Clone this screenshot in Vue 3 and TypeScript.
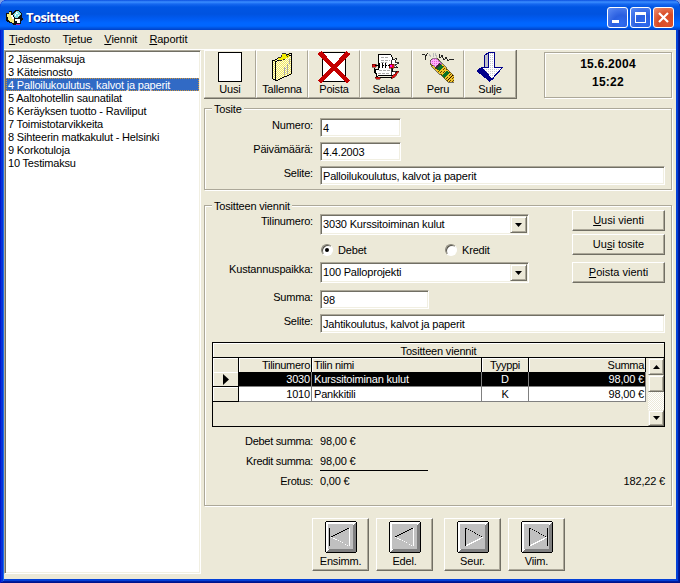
<script setup lang="ts">
import { ref } from 'vue'

interface MenuItem { before: string; key: string; after: string }
interface Entry { account: string; name: string; type: string; sum: string }

const menu: MenuItem[] = [
  { before: '', key: 'T', after: 'iedosto' },
  { before: 'T', key: 'i', after: 'etue' },
  { before: '', key: 'V', after: 'iennit' },
  { before: '', key: 'R', after: 'aportit' },
]

const vouchers: string[] = [
  '2 Jäsenmaksuja',
  '3 Käteisnosto',
  '4 Palloilukoulutus, kalvot ja paperit',
  '5 Aaltohotellin saunatilat',
  '6 Keräyksen tuotto - Raviliput',
  '7 Toimistotarvikkeita',
  '8 Sihteerin matkakulut - Helsinki',
  '9 Korkotuloja',
  '10 Testimaksu',
]
const selectedVoucher = ref(2)

const tools: string[] = ['Uusi', 'Tallenna', 'Poista', 'Selaa', 'Peru', 'Sulje']

const entries: Entry[] = [
  { account: '3030', name: 'Kurssitoiminan kulut', type: 'D', sum: '98,00 €' },
  { account: '1010', name: 'Pankkitili', type: 'K', sum: '98,00 €' },
]
const currentEntry = ref(0)
const side = ref<'debet' | 'kredit'>('debet')

const nav: string[] = ['Ensimm.', 'Edel.', 'Seur.', 'Viim.']
</script>

<template>
  <div class="desktop">
    <div class="window">
      <header class="titlebar">
        <svg class="app-icon" width="17" height="16" viewBox="0 0 17 16" shape-rendering="crispEdges">
          <path d="M0 3h3v-2h3v2l3-3h4l3 4v3l1 2-2 2v3h-3v1h-4l-3-2-4-1-2-4z" fill="#111" />
          <path d="M1 4h2v-2h2v3l3 5v3l-4-1-2-3z" fill="#f4ec7c" />
          <path d="M7 4l3-3h3l2 3-3 4H9z" fill="#7fe0e8" />
          <path d="M10 2h1v1h1v1h-2v2h-1V4h1zM12 5h1v1h-1z" fill="#fff" />
          <path d="M9 9h5v4h-3v-2H9z" fill="#fff" />
          <path d="M5 5h2v2h1v2H6V7H5z" fill="#fff" />
          <path d="M10 14h4v1h-4z" fill="#c020b0" />
        </svg>
        <span class="title">Tositteet</span>
        <span class="win-btn"><svg width="19" height="19"><path d="M4 12h7v3H4z" fill="#fff" /></svg></span>
        <span class="win-btn"><svg width="19" height="19"><path d="M4 4h11v11H4zM5 7v7h9V7z" fill="#fff" fill-rule="evenodd" /></svg></span>
        <span class="win-btn close"><svg width="19" height="19"><path d="M5 5l9 9M14 5l-9 9" stroke="#fff" stroke-width="2.2" /></svg></span>
      </header>

      <nav class="menu">
        <span v-for="m in menu" :key="m.after">{{ m.before }}<u>{{ m.key }}</u>{{ m.after }}</span>
      </nav>

      <div class="client">
        <ul class="list">
          <li
            v-for="(v, i) in vouchers"
            :key="v"
            :class="{ selected: i === selectedVoucher }"
            @click="selectedVoucher = i"
          >{{ v }}</li>
        </ul>

        <main class="main">
          <div class="top">
            <div class="toolbar">
              <button v-for="(t, i) in tools" :key="t" class="tool">
                <svg width="32" height="32" viewBox="0 0 32 32" shape-rendering="crispEdges">
                  <template v-if="i === 0">
                    <rect x="4.500" y="1.500" width="23" height="29" fill="#fff" stroke="#000" />
                  </template>
                  <template v-else-if="i === 1">
                    <defs>
                      <pattern id="yellow" width="2" height="2" patternUnits="userSpaceOnUse">
                        <rect width="2" height="2" fill="#fffce0" />
                        <path d="M0 0h1v1H0zM1 1h1v1H1z" fill="#f0e860" />
                      </pattern>
                    </defs>
                    <path d="M6.500 9.500L24.500 1.500V22.500L9.500 29.500L6.500 27.500Z" fill="url(#yellow)" />
                    <path d="M6 9h1v19H6zM9 11h1v19H9zM25 2h1v21h-1zM7 28h2v1H7zM7 9h2v1H7zM9 8h2v1H9zM11 7h2v1h-2zM21 3h2v1h-2zM23 2h2v1h-2zM9 10h2v1H9zM11 9h2v1h-2zM21 5h2v1h-2zM23 4h2v1h-2zM10 29h2v1h-2zM12 28h2v1h-2zM14 27h2v1h-2zM16 26h2v1h-2zM18 25h3v1h-3zM21 24h2v1h-2zM23 23h2v1h-2z" fill="#000" />
                    <path d="M12 8V6h3V4l2-2h3v2h3v2l-4 2-5 2z" fill="#f4ee00" />
                    <path d="M12 6h3v1h-3zM15 4h1v2h-1zM16 2h4v1h-4zM20 3h1v2h-1zM21 5h1v1h-1zM13 9h3v1h-3zM17 8h2v1h-2z" fill="#333" />
                    <path d="M18 16h1v8h-1zM21 13h1v10h-1zM23 8h1v5h-1zM19 17h1v1h-1z" fill="#aaa" />
                  </template>
                  <template v-else-if="i === 2">
                    <rect x="4.500" y="1.500" width="23" height="29" fill="#fff" stroke="#000" />
                    <path d="M1.500 1.500L30.500 31M30.500 1.500L1.500 31" stroke="#c40000" stroke-width="4.400" />
                  </template>
                  <template v-else-if="i === 3">
                    <path d="M8.500 3.500H20.500L22.500 6.500V24.500H9.500L6.500 25.500L5.500 18.500H8.500Z" fill="#fff" stroke="#000" />
                    <path d="M11 6.500h8M11 9.500h9M11 11.500h6M9 19.500h11M8 22.500h11" stroke="#aaa" stroke-dasharray="3 1" />
                    <path d="M22 9l5-2-2 4 4 1-4 2 3 3-5-1-1 5 5-1-3 4h-3z" fill="#fff" stroke="#000" stroke-width=".8" />
                    <path d="M2 13h4v3H2zM19 13h5v4h-5zM5 26h5v2H6zM21 26l7-6h1l-4 6-4 2z" fill="#e01010" stroke="#400" stroke-width=".5" />
                    <path d="M5 14.500H20M9.500 12v5M12.500 12v5M15.500 12v5" stroke="#000" />
                    <path d="M10 14.500h2M14 14.500h1M17 14.500h1" stroke="#fff" />
                    <path d="M20 14h2v2h-2z" fill="#f0f" />
                    <path d="M4.500 17v4l2 2M10 26.500h12" fill="none" stroke="#000" />
                  </template>
                  <template v-else-if="i === 4">
                    <defs>
                      <pattern id="pencil" width="3" height="3" patternUnits="userSpaceOnUse">
                        <rect width="3" height="3" fill="#f0c428" />
                        <path d="M0 0h1v1H0zM1 2h1v1H1z" fill="#604000" />
                      </pattern>
                      <pattern id="rubber" width="2" height="2" patternUnits="userSpaceOnUse">
                        <rect width="2" height="2" fill="#ffb4fa" />
                        <path d="M0 0h1v1H0z" fill="#e858dc" />
                      </pattern>
                    </defs>
                    <path d="M0 3.500h3v5M3 6l3-4M17 3l1 4 2-3 2 5 2-3 2 4 2-2h4" fill="none" stroke="#111" stroke-width=".9" />
                    <path d="M7 3l2 3M11 2l1 4M13 2l2 5" fill="none" stroke="#bbb" />
                    <path d="M9 9l3-2h3l3 3L32 25v6h-6L11 17l-3-4z" fill="url(#pencil)" stroke="#222" stroke-width=".6" />
                    <path d="M9 9l2-2h3l6 6-5 5-7-6z" fill="url(#rubber)" stroke="#333" stroke-width=".5" />
                    <path d="M17 12l2 1-4 5-2-1z" fill="#333" />
                    <path d="M19 13l2 3-4 4-2-2z" fill="#087028" />
                    <path d="M25 19l2 3-5 5-2-3z" fill="#087028" />
                    <path d="M26 29l5-5" stroke="#200" />
                  </template>
                  <template v-else>
                    <defs>
                      <pattern id="dots" width="2" height="2" patternUnits="userSpaceOnUse">
                        <rect width="2" height="2" fill="#fff" />
                        <path d="M0 0h1v1H0z" fill="#c8c8d0" />
                      </pattern>
                    </defs>
                    <path d="M10.500 4.500L14.500 1.500V17L10.500 17Z" fill="#c0c0c8" stroke="#00008a" />
                    <path d="M3 20L8 16L20 27L15.500 30Z" fill="#00008a" stroke="#00008a" />
                    <path d="M14.500 1.500H20.500V16.500H28.500L18 28L7.500 16.500H14.500Z" fill="url(#dots)" stroke="#00008a" />
                  </template>
                </svg>
                <span>{{ t }}</span>
              </button>
            </div>
            <div class="clock"><span>15.6.2004</span><span>15:22</span></div>
          </div>

          <section class="group voucher">
            <h2>Tosite</h2>
            <div class="row"><label>Numero:</label><div class="field small">4</div></div>
            <div class="row"><label>Päivämäärä:</label><div class="field small">4.4.2003</div></div>
            <div class="row"><label>Selite:</label><div class="field wide">Palloilukoulutus, kalvot ja paperit</div></div>
          </section>

          <section class="group lines">
            <h2>Tositteen viennit</h2>
            <div class="split">
              <div class="form">
                <div class="row combo-row">
                  <label>Tilinumero:</label>
                  <div class="field combo">3030 Kurssitoiminan kulut
                    <span class="arrow"><svg width="7" height="4"><path d="M0 0h7L3.500 4z" /></svg></span>
                  </div>
                </div>
                <div class="radios">
                  <span class="option" @click="side = 'debet'"><i :class="['radio', { on: side === 'debet' }]"></i>Debet</span>
                  <span class="option" @click="side = 'kredit'"><i :class="['radio', { on: side === 'kredit' }]"></i>Kredit</span>
                </div>
                <div class="row combo-row second">
                  <label>Kustannuspaikka:</label>
                  <div class="field combo">100 Palloprojekti
                    <span class="arrow"><svg width="7" height="4"><path d="M0 0h7L3.500 4z" /></svg></span>
                  </div>
                </div>
                <div class="row"><label>Summa:</label><div class="field amount">98</div></div>
              </div>
              <div class="actions">
                <button class="btn"><span><u>U</u>usi vienti</span></button>
                <button class="btn"><span>Uu<u>s</u>i tosite</span></button>
                <button class="btn last"><span><u>P</u>oista vienti</span></button>
              </div>
            </div>
            <div class="row"><label>Selite:</label><div class="field wide">Jahtikoulutus, kalvot ja paperit</div></div>

            <div class="grid">
              <div class="caption">Tositteen viennit</div>
              <div class="grid-body">
                <div class="cells">
                  <div class="line head">
                    <span></span><span class="num">Tilinumero</span><span>Tilin nimi</span><span class="mid">Tyyppi</span><span class="num">Summa</span>
                  </div>
                  <div v-for="(e, i) in entries" :key="e.account" :class="['line', { current: i === currentEntry }]">
                    <span class="marker"><svg v-if="i === currentEntry" width="6" height="11"><path d="M0 0L6 5.500L0 11z" /></svg></span>
                    <span class="num">{{ e.account }}</span><span>{{ e.name }}</span><span class="mid">{{ e.type }}</span><span class="num">{{ e.sum }}</span>
                  </div>
                </div>
                <div class="scroll">
                  <span class="sb"><svg width="7" height="4"><path d="M0 4h7L3.500 0z" /></svg></span>
                  <span class="sb thumb"></span>
                  <span class="sb down"><svg width="7" height="4"><path d="M0 0h7L3.500 4z" /></svg></span>
                </div>
              </div>
            </div>

            <div class="sums">
              <div class="sum"><label>Debet summa:</label><span>98,00 €</span></div>
              <div class="sum"><label>Kredit summa:</label><span class="ruled">98,00 €</span></div>
              <div class="sum"><label>Erotus:</label><span>0,00 €</span><span class="total">182,22 €</span></div>
            </div>
          </section>

          <div class="nav">
            <button v-for="(n, i) in nav" :key="n" :class="['nav-btn', { apart: i === 2 }]">
              <svg width="32" height="32" viewBox="0 0 32 32" shape-rendering="crispEdges">
                <path d="M1 0h30v1h1v30h-1v1H1v-1H0V1h1z" fill="#000" />
                <path d="M1 1h30v30H1z" fill="#808080" />
                <path d="M1 1h30l-3 3v24H4l-3 3z" fill="#fff" />
                <path d="M3 3h25v25H3z" fill="#c0c0c0" />
                <g fill="none">
                  <template v-if="i < 2">
                    <path d="M24.500 7v18" stroke="#fff" />
                    <path d="M6 16L24 25" stroke="#fff" stroke-dasharray="1.500 1" />
                    <path d="M6 16L24 7" stroke="#000" stroke-width="1.200" />
                    <path v-if="i === 0" d="M4.500 7v18" stroke="#000" />
                  </template>
                  <template v-else>
                    <path d="M8.500 25L26 16" stroke="#fff" stroke-width="1.300" />
                    <path d="M8.500 7L26 16" stroke="#000" stroke-dasharray="1.500 1" />
                    <path d="M8.500 7v18" stroke="#000" />
                    <path v-if="i === 3" d="M26.500 7v18" stroke="#000" />
                  </template>
                </g>
              </svg>
              <span>{{ n }}</span>
            </button>
          </div>
        </main>
      </div>
    </div>
  </div>
</template>

<style>
body { margin: 0; background: #6f94dc; }
</style>

<style scoped>
* { box-sizing: border-box; }
.desktop { width: 680px; height: 583px; background: #7d9fe6; overflow: hidden; }
.window {
  width: 680px; height: 583px; border-radius: 7px 7px 0 0; overflow: hidden;
  display: flex; flex-direction: column;
  background: #0831d9; padding: 0 4px 4px;
  box-shadow: inset 1px 0 #0019cf, inset -1px -1px #00138c, inset 3px 0 #0831d9, inset -2px -2px #001ea0, inset 4px 0 #166aee, inset -4px -4px #0441d8;
  font: 11px/13px "Liberation Sans", Arial, sans-serif; letter-spacing: -0.18px; color: #000;
}
button { font: inherit; letter-spacing: inherit; color: inherit; padding: 0; margin: 0; }
u { text-underline-offset: 1px; text-decoration-thickness: 1px; }

.titlebar {
  flex: none; height: 30px; margin: 0 -4px; padding: 4px 6px 0 6px;
  display: flex; align-items: center; gap: 2px;
  background: linear-gradient(#0a4fe0 0, #3b8eff 2px, #1668f0 4px, #0055e3 7px, #0053e0 14px, #005bf2 19px, #0066ff 23px, #0066ff 26px, #0054e0 28px, #0040c8 30px);
}
.app-icon { margin-top: 1px; }
.title {
  flex: 1; margin-left: 1px; color: #fff; text-shadow: 1px 1px #0a1883;
  font: bold 13px/18px "Open Sans", "Noto Sans", sans-serif; letter-spacing: -0.6px;
}
.win-btn {
  width: 21px; height: 21px; border: 1px solid #fff; border-radius: 3px; margin-left: 0;
  background: radial-gradient(circle at 70% 80%, #2f6cf0, #2a5fe0 40%, #5e8df5 100%);
}
.win-btn svg { display: block; }
.win-btn.close { background: radial-gradient(circle at 70% 80%, #e0542e, #d84a24 45%, #ee9174 100%); }

.menu {
  flex: none; height: 20px; background: #ece9d8; border-bottom: 1px solid #fff;
  padding: 3px 5px 0; display: flex; gap: 12px; letter-spacing: -0.05px;
}
.client { flex: 1; display: flex; background: #ece9d8; min-height: 0; }
.list {
  width: 197px; height: 524px; margin: 0; padding: 1px; list-style: none; background: #fff;
  border: 1px solid; border-color: #aca899 #fff #fff #aca899;
  box-shadow: inset 1px 1px #716f64, inset -1px -1px #f1efe2;
}
.list li { height: 13px; padding-left: 1px; border: 1px solid transparent; line-height: 13px; white-space: nowrap; }
.list li.selected { background: #316ac5; color: #fff; border: 1px dotted #ce953a; }
.main { margin-left: 3px; width: 468px; }

.top { display: flex; justify-content: space-between; height: 58px; }
.toolbar { display: flex; height: 49px; width: 313px; border-right: 1px solid #716f64; border-bottom: 1px solid #716f64; }
.tool {
  width: 52px; height: 48px; background: #ece9d8; border: 1px solid;
  border-color: #fff #aca899 #aca899 #fff;
  display: flex; flex-direction: column; align-items: center;
}
.tool svg { flex: none; }
.tool span { line-height: 13px; position: relative; }
.clock {
  width: 128px; height: 46px; margin-top: 2px; padding-top: 2px; border: 1px solid #aca899;
  box-shadow: 1px 1px #fff, inset 1px 1px #fff;
  display: flex; flex-direction: column; align-items: center;
  font-weight: bold; font-size: 12px; line-height: 18px; letter-spacing: 0.25px;
}

.group { position: relative; border: 1px solid #aca899; box-shadow: 1px 1px #fff, inset 1px 1px #fff; }
.group h2 {
  position: absolute; left: 7px; top: -7px; margin: 0; padding: 0 2px; background: #ece9d8;
  font: inherit; line-height: 14px;
}
.voucher { height: 82px; padding-top: 9px; }
.lines { height: 301px; margin-top: 15px; }
.row { display: flex; height: 24px; }
.row label { width: 108px; margin-right: 7px; padding-top: 1px; text-align: right; }
.field {
  height: 19px; background: #fff; padding: 2px 0 0 2px; line-height: 15px; white-space: nowrap;
  border: 1px solid; border-color: #aca899 #fff #fff #aca899;
  box-shadow: inset 1px 1px #716f64, inset -1px -1px #f1efe2;
}
.small { width: 81px; }
.wide { width: 345px; }
.amount { width: 109px; }
.combo { width: 209px; height: 21px; display: flex; justify-content: space-between; padding: 1px; padding-left: 2px; line-height: 17px; }
.arrow, .sb {
  width: 17px; background: #ece9d8; border: 1px solid; border-color: #f1efe2 #716f64 #716f64 #f1efe2;
  box-shadow: inset 1px 1px #fff, inset -1px -1px #aca899;
  display: flex; align-items: center; justify-content: center;
}
.combo-row { height: 21px; }
.combo-row.second { height: 28px; }
.split { display: flex; justify-content: space-between; padding-right: 6px; height: 108px; }
.form { width: 324px; padding-top: 8px; }
.radios { height: 27px; padding-left: 116px; display: flex; align-items: center; padding-top: 3px; }
.option { display: flex; align-items: center; width: 124px; gap: 5px; }
.option:last-child { width: 80px; }
.radio {
  width: 12px; height: 12px; border-radius: 50%; background: #fff;
  border: 1px solid; border-color: #8a877a #fff #fff #8a877a;
  box-shadow: inset 1px 1px #55534a; display: flex; align-items: center; justify-content: center;
}
.radio.on::after { content: ""; width: 4px; height: 4px; border-radius: 50%; background: #000; }
.actions { width: 93px; padding-top: 4px; display: flex; flex-direction: column; gap: 3px; }
.btn {
  height: 21px; background: #ece9d8; border: 1px solid; border-color: #fff #716f64 #716f64 #fff;
  box-shadow: inset -1px -1px #aca899; letter-spacing: 0;
}
.btn span { display: block; line-height: 17px; }
.btn.last { margin-top: 4px; }

.grid { margin: 4px 0 0 7px; width: 453px; height: 85px; border: 1px solid #000; }
.caption { height: 15px; border-bottom: 1px solid #000; text-align: center; line-height: 16px; box-shadow: inset 1px 1px #fff; }
.grid-body { display: flex; justify-content: space-between; height: 68px; }
.line { display: grid; grid-template-columns: 26px 73px 170px 47px 117px; height: 15px; background: #fff; }
.line span { border-right: 1px solid #808080; border-bottom: 1px solid #808080; padding: 0 2px; white-space: nowrap; line-height: 14px; }
.line .num { text-align: right; padding-right: 1px; }
.line .mid { text-align: center; }
.line span:first-child { background: #ece9d8; border-color: #000; box-shadow: inset 1px 1px #fff; }
.line .marker { display: flex; align-items: center; justify-content: center; }
.line.head { height: 14px; background: #ece9d8; letter-spacing: -0.3px; }
.line.head span { border-color: #000; box-shadow: inset 1px 1px #fff; line-height: 14px; }
.line.current { background: #000; color: #fff; }
.scroll {
  width: 16px; height: 68px; display: flex; flex-direction: column;
  background: repeating-conic-gradient(#fff 0 25%, #ece9d8 0 50%) 0 0 / 2px 2px;
}
.sb { width: 16px; height: 17px; flex: none; }
.sb.down { margin-top: auto; height: 16px; }

.sums { padding-top: 4px; }
.sum { display: flex; height: 20px; line-height: 20px; padding-right: 6px; }
.sum label { width: 108px; margin-right: 7px; text-align: right; letter-spacing: -0.3px; }
.sum span { line-height: 21px; }
.sum label { line-height: 21px; }
.ruled { width: 108px; border-bottom: 1px solid #000; }
.total { margin-left: auto; }

.nav { display: flex; gap: 7px; margin: 12px 0 0 108px; }
.nav-btn {
  width: 57px; height: 53px; background: #ece9d8; border: 1px solid;
  border-color: #fff #716f64 #716f64 #fff; box-shadow: inset -1px -1px #aca899;
  display: flex; flex-direction: column; align-items: center; padding-top: 2px;
}
.nav-btn.apart { margin-left: 4px; }
.nav-btn svg { flex: none; }
.nav-btn span { margin-top: 2px; line-height: 13px; }
</style>
